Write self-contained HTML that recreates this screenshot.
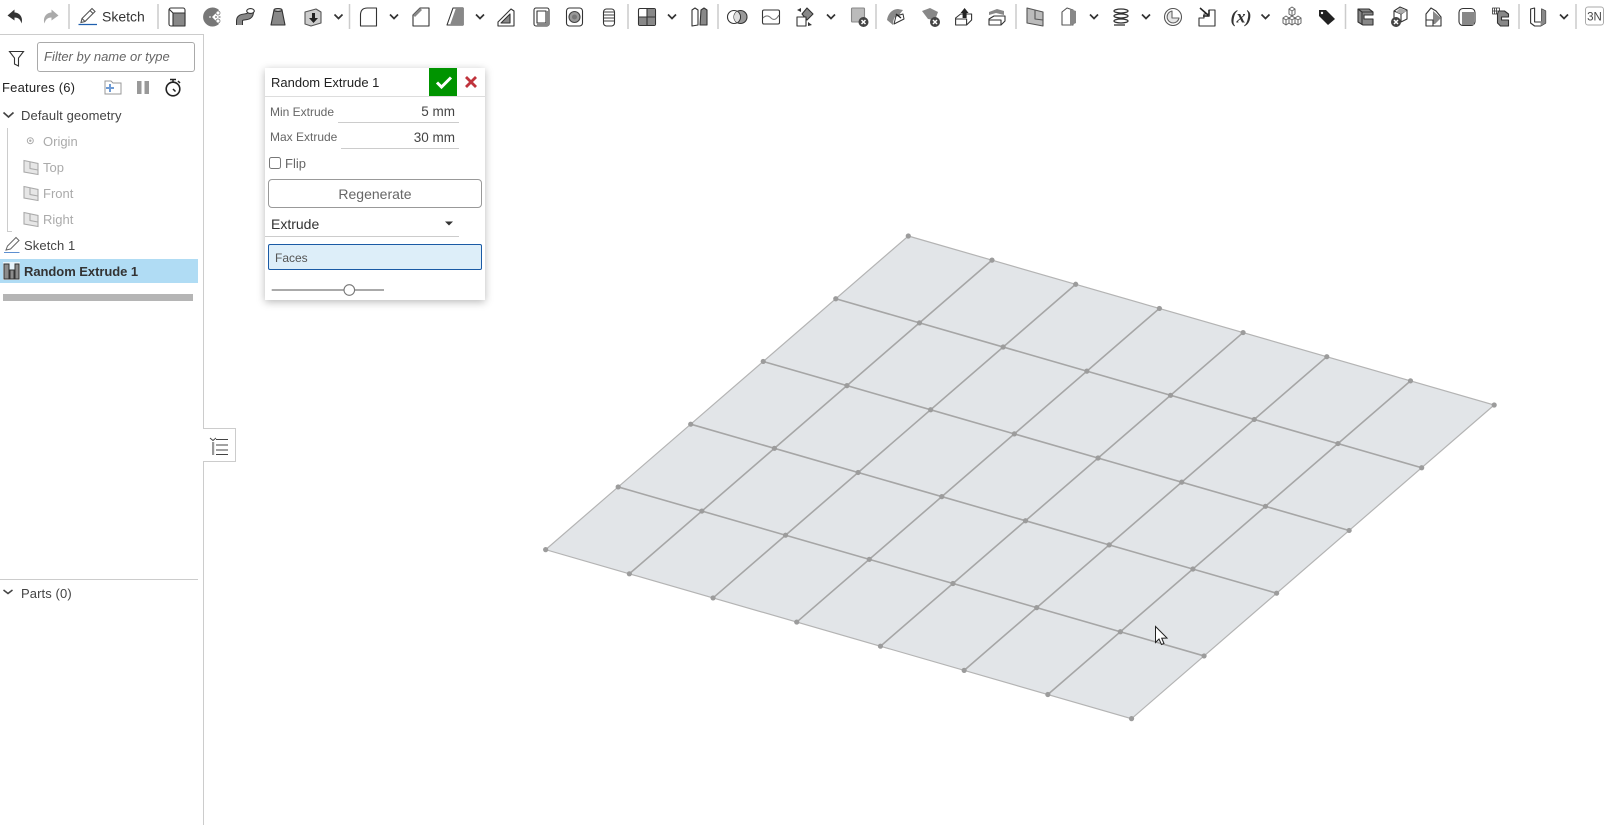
<!DOCTYPE html>
<html lang="en"><head><meta charset="utf-8"><title>Random Extrude 1</title>
<style>
*{box-sizing:border-box}
html,body{margin:0;padding:0;width:1608px;height:825px;overflow:hidden;background:#fff;font-family:"Liberation Sans",sans-serif;color:#333}
.a{position:absolute;white-space:nowrap;line-height:16px}
svg{position:absolute;overflow:visible}
.g{color:#aaa;font-size:13px}
.p{font-size:13px;color:#444;letter-spacing:.1px}
.l{font-size:12px;color:#666}
.u{position:absolute;height:1px;background:#ccc}
</style></head><body>

<!-- canvas -->
<svg style="left:0;top:0" width="1608" height="825" viewBox="0 0 1608 825">
<path d="M908.3 236L1494.2 405L1131.55 718.65L545.65 549.65Z" fill="#e2e5e8" stroke="#b4b4b4" stroke-width="1.200"/>
<g stroke="#a6a6a6" stroke-width="1.600" fill="none">
<path d="M835.77 298.73L1421.67 467.73M763.24 361.46L1349.14 530.46M690.71 424.19L1276.61 593.19M618.18 486.92L1204.08 655.92"/>
<path d="M992 260.14L629.35 573.79M1075.7 284.28L713.05 597.93M1159.4 308.42L796.75 622.07M1243.1 332.56L880.45 646.21M1326.8 356.7L964.15 670.35M1410.5 380.84L1047.85 694.49"/>
</g>
<defs><g id="row" fill="#9c9c9c"><circle cx="908.3" cy="236" r="2.600"/><circle cx="992" cy="260.14" r="2.600"/><circle cx="1075.7" cy="284.28" r="2.600"/><circle cx="1159.4" cy="308.42" r="2.600"/><circle cx="1243.1" cy="332.56" r="2.600"/><circle cx="1326.8" cy="356.7" r="2.600"/><circle cx="1410.5" cy="380.84" r="2.600"/><circle cx="1494.2" cy="405" r="2.600"/></g></defs>
<use href="#row"/><use href="#row" transform="translate(-72.53 62.73)"/><use href="#row" transform="translate(-145.06 125.46)"/><use href="#row" transform="translate(-217.59 188.19)"/><use href="#row" transform="translate(-290.12 250.92)"/><use href="#row" transform="translate(-362.65 313.65)"/>
<!-- cursor -->
<path d="M1155.5 626.5V642.5L1159 639L1161.5 644.5L1164 643.5L1161.7 638.2L1167 638Z" fill="#fff" stroke="#222" stroke-width="1"/>
</svg>

<!-- toolbar -->
<svg style="left:0;top:0" width="1608" height="34" viewBox="0 0 1608 34">
<defs>
<g id="x"><circle r="5" fill="#444"/><path d="M-2 -2L2 2M2 -2L-2 2" stroke="#fff" stroke-width="1.500"/></g>
<path id="c" d="M-4 -2L0 2L4 -2" fill="none" stroke="#333" stroke-width="1.700"/>
</defs>
<g stroke="#ccc" stroke-width="1.500"><path d="M69 4V29M158 4V29M349.500 4V29M628 4V29M718 4V29M876 4V29M1016 4V29M1345.500 4V29M1519 4V29M1576 4V29"/></g>
<use href="#c" x="338.500" y="16.500"/><use href="#c" x="394" y="16.500"/><use href="#c" x="480" y="16.500"/><use href="#c" x="672" y="16.500"/><use href="#c" x="831" y="16.500"/><use href="#c" x="1094" y="16.500"/><use href="#c" x="1146" y="16.500"/><use href="#c" x="1265.500" y="16.500"/><use href="#c" x="1564" y="16.500"/>
<g transform="translate(15.500 16.500)"><path d="M-1 -7L-8 -1L-1 4V1C3 1 5 3 6 7C8 1 4 -4 -1 -4Z" fill="#333"/></g>
<g transform="translate(50.500 16.500)"><path d="M1 -7L8 -1L1 4V1C-3 1 -5 3 -6 7C-8 1 -4 -4 1 -4Z" fill="#aaa"/></g>
<g transform="translate(88 16.500)" fill="none" stroke="#555" stroke-width="1.100"><path d="M-7 6L-6 2L4 -8L7 -5L-3 5Z"/><path d="M2 -6L5 -3M-6 2L-3 5"/><path d="M-9.500 8H9" stroke="#1f5fae" stroke-width="1.300"/></g>
<text x="102" y="21.500" font-size="14" fill="#333" font-family="Liberation Sans, sans-serif">Sketch</text>
<g stroke="#333" stroke-width="1.100" stroke-linejoin="round">
<g transform="translate(177 17)"><rect x="-8" y="-9" width="16" height="18" rx="2" fill="#fff"/><path d="M-8 -8L-4 -4H8" fill="none"/><rect x="-4" y="-4" width="12" height="13" fill="#888"/></g>
<g transform="translate(212 17)"><path d="M7 -7A9.500 9.500 0 1 0 7 7L0 0Z" fill="#777" stroke="none"/><circle cx="6" cy="-4" r="2" fill="#fff" stroke="#777" stroke-width=".8"/><circle cx="6" cy="4" r="2" fill="#fff" stroke="#777" stroke-width=".8"/><path d="M-3 0H9" stroke="#fff" stroke-dasharray="2 1.500" fill="none"/><path d="M3 0H9" stroke="#555" stroke-dasharray="2 1.500" fill="none"/></g>
<g transform="translate(245.500 17)"><path d="M-6 8V4C-6 -3 5 3 5 -5" fill="none" stroke="#333" stroke-width="7"/><path d="M-6 8V4C-6 -3 5 3 5 -5" fill="none" stroke="#888" stroke-width="5"/><ellipse cx="5" cy="-6" rx="3.800" ry="2.400" fill="#fff"/></g>
<g transform="translate(278 17)"><path d="M-4 -7H4L7 8H-7Z" fill="#888"/><ellipse cx="0" cy="-7" rx="4" ry="1.500" fill="#bbb"/></g>
<g transform="translate(313 17)"><path d="M-8 -5L3 -8L8 -5V6L-2 9L-8 7Z" fill="#ccc" stroke="#555"/><path d="M-1 -4H2V1H5L0.500 6L-4 1H-1Z" fill="#222" stroke="none"/></g>
<g transform="translate(368.500 17)"><path d="M-8 9V-2Q-8 -9 -1 -9H8V9Z" fill="#fff"/></g>
<g transform="translate(421 17)"><path d="M-8 9V-2L-1 -9H8V9Z" fill="#fff"/><path d="M-8 -2L-1 -9L1 -7L-6 0Z" fill="#888" stroke="none"/></g>
<g transform="translate(455 17)"><path d="M-8 8L-2 -9H8V8Z" fill="#fff"/><path d="M-5 8L1 -9H8V8Z" fill="#888" stroke="none"/></g>
<g transform="translate(506 17)"><path d="M-8 9V5L5 -8L8 -6V9Z" fill="#fff"/><path d="M-5 6L4 -3V6Z" fill="#888"/></g>
<g transform="translate(541 17)"><rect x="-7" y="-9" width="15" height="18" rx="2" fill="#fff"/><path d="M-4 -6H5V6H-4Z" fill="#fff"/><path d="M5 -6H8V9H-4V6H5Z" fill="#888" stroke="none"/></g>
<g transform="translate(574.500 17)"><rect x="-8" y="-9" width="16" height="18" rx="3" fill="#fff"/><circle r="5.500" fill="#999" stroke="#444"/><circle r="2.500" fill="#777" stroke="none"/></g>
<g transform="translate(609 17)"><rect x="-5.500" y="-8" width="11" height="17" rx="3" fill="#fff"/><path d="M-5 -5H5M-5 -2H5M-5 1H5M-5 4H5" stroke="#666" stroke-width="1.300" fill="none"/></g>
<g transform="translate(647 17)"><rect x="-8.500" y="-8.500" width="17" height="17" rx="1.500" fill="#fff"/><path d="M0 -8H8V0H0ZM-8 0H8V8H-8Z" fill="#888" stroke="none"/><path d="M-8 0H8M0 -8V8" fill="none"/></g>
<g transform="translate(699 17)"><path d="M-1 8L-7 9V-7L-4 -9L-1 -7Z" fill="#fff"/><path d="M1 8H8V-7L5 -9L2 -7Z" fill="#888"/></g>
<g transform="translate(737 17)" fill="none"><circle cx="3.500" r="6.500" fill="#999" stroke="none"/><circle cx="3.500" r="6.500"/><circle cx="-3" r="6.500"/><path d="M0 -5.500A6.500 6.500 0 0 1 0 5.500A6.500 6.500 0 0 1 0 -5.500" fill="#ddd" stroke="none"/></g>
<g transform="translate(771 17)"><rect x="-8.500" y="-7" width="17" height="14" rx="1.500" fill="#fff"/><path d="M-8 1Q-4 -3 0 1T8 -2" fill="none" stroke="#777"/></g>
<g transform="translate(805 17)"><path d="M2 -9L8 -3L2 3L-3 -3Z" fill="#888"/><rect x="-8" y="0" width="9" height="9" fill="#fff"/><path d="M-8 -7L-4 -9V-5ZM7 8L3 9V5Z" fill="#333" stroke="none"/></g>
<g transform="translate(858.500 16)"><rect x="-7" y="-8" width="13" height="14" rx="1" fill="#bbb" stroke="#888"/><use href="#x" x="5" y="6" stroke="none"/></g>
<g transform="translate(896 17)" stroke="none"><path d="M-9 3C-8 -4 -3 -8 2 -8L7 -7L3 -2C-1 -2 -3 2 -3 8Z" fill="#888"/><path d="M-2 7L0 -1L7 -3L8 2Z" fill="#fff" stroke="#333" stroke-width="1"/><path d="M0 -3L5 1" stroke="#222" stroke-width="1.400"/></g>
<g transform="translate(931 16)" stroke="none"><path d="M-9 -5L-1 -8L7 -4L4 4L-3 3Z" fill="#888"/><use href="#x" x="4" y="6"/></g>
<g transform="translate(963.600 17)"><path d="M-8 1L-3 -3H8V3L3 8H-8Z" fill="#fff"/><path d="M-8 2H3V8" fill="none"/><path d="M1 -9L5 -4H3V1H-1V-4H-3Z" fill="#222" stroke="none"/></g>
<g transform="translate(997 17)"><path d="M-8 2L-3 -1H8V4L4 8H-8Z" fill="#fff"/><path d="M-8 3H4V8" fill="none"/><path d="M-8 -5L0 -8L7 -6V-2L-1 -4L-8 -2Z" fill="#888" stroke="none"/></g>
<g transform="translate(1035 17)"><path d="M-8 -9L8 -5V9L-8 6Z" fill="#bbb" stroke="#555"/><path d="M0 -7V2L8 3" fill="none" stroke="#555"/></g>
<g transform="translate(1069 17)"><path d="M-7 8V-5L-2 -9L4 -7V8Z" fill="#fff" stroke="#555"/><path d="M1 -8L7 -6V6L1 9Z" fill="#888" stroke="none"/></g>
<g transform="translate(1121 17)" fill="none" stroke-width="1.300"><ellipse cx="0" cy="-6" rx="7" ry="2"/><ellipse cx="0" cy="-1" rx="7" ry="2"/><ellipse cx="0" cy="4" rx="7" ry="2"/><path d="M-7 8H4"/></g>
<g transform="translate(1173 17)"><circle r="8.500" fill="#fff" stroke="#555"/><path d="M-1 -6V1H6A6 6 0 1 1 -1 -6Z" fill="#e6e6e6" stroke="#666"/></g>
<g transform="translate(1207 17)"><path d="M-8 9V1H-3V-3H2V-7H8V9Z" fill="#fff"/><path d="M-7 -9L1 -2M2 -7V-1H-4" fill="none" stroke="#222" stroke-width="1.500"/></g>
<g transform="translate(1292 17)" fill="#fff" stroke="#666" stroke-width="1"><path d="M-3 -8L0 -10L3 -8V-3L0 -1L-3 -3Z"/><path d="M-3 -8L0 -6L3 -8M0 -6V-1"/><path d="M-9 1L-6 -1L-3 1V6L-6 8L-9 6Z"/><path d="M-9 1L-6 3L-3 1M-6 3V8"/><path d="M3 1L6 -1L9 1V6L6 8L3 6Z"/><path d="M3 1L6 3L9 1M6 3V8"/><path d="M-3 1L0 -1L3 1V6L0 8L-3 6Z"/><path d="M-3 1L0 3L3 1M0 3V8"/></g>
<g transform="translate(1327 17)" stroke="none"><path d="M-8 -7H-1L8 2L1 8L-8 -1Z" fill="#222"/><circle cx="-5" cy="-4" r="1.200" fill="#fff"/></g>
<g transform="translate(1365 17)"><path d="M-7 -8H4L8 -5V-2H-1V2H8V8H-2L-7 5Z" fill="#888"/><path d="M-7 -8L-3 -5H8M-3 -5V8" fill="none"/></g>
<g transform="translate(1399 16)"><path d="M-5 -5L1 -9L8 -6V3L2 6L-5 3Z" fill="#fff"/><path d="M-5 -5L2 -2L8 -6M2 -2V6" fill="none"/><path d="M-3 -4L2 -2L8 -5L1 -8Z" fill="#aaa" stroke="none"/><use href="#x" x="-3" y="6" stroke="none"/></g>
<g transform="translate(1433 17)"><path d="M-7 9V-3L-2 -9L3 -6L8 0V9Z" fill="#fff"/><path d="M0 -6L8 1L2 7H0Z" fill="#888" stroke="none"/><path d="M-7 3H0V9" fill="none"/></g>
<g transform="translate(1467 17)"><rect x="-8" y="-8.500" width="16" height="17" rx="4" fill="#fff"/><rect x="-5" y="-5" width="12" height="13" fill="#888" stroke="none"/></g>
<g transform="translate(1500.500 17)"><path d="M-8 -9H-1V-3H-8ZM-6 -9V-3M-4 -9V-3M-8 -6H-1" fill="#fff" stroke-width=".8"/><path d="M-2 -6H4L8 -3V0H1V3H8V9H0L-3 6V-3Z" fill="#888"/></g>
<g transform="translate(1537.600 17)"><path d="M-7 -8L-3 -9V5H4V-8L8 -6V6L3 9H-3L-7 6Z" fill="#fff"/><path d="M4 -8L8 -6V6L3 9V5L4 4Z" fill="#888" stroke="none"/></g>
</g>
<text x="1241" y="22.500" font-size="18" font-weight="bold" font-style="italic" text-anchor="middle" fill="#333" font-family="Liberation Serif, serif">(x)</text>
<rect x="1585.500" y="7" width="18" height="18" rx="2.500" fill="#fff" stroke="#aaa"/>
<text x="1594.500" y="20.500" font-size="11.500" text-anchor="middle" fill="#444" font-family="Liberation Sans, sans-serif">3N</text>
</svg>

<!-- sidebar frame -->
<div class="u" style="left:0;top:34px;width:204px;background:#ccc"></div>
<div class="u" style="left:203px;top:34px;width:1px;height:394px;background:#ccc"></div>
<div class="u" style="left:203px;top:461px;width:1px;height:364px;background:#ccc"></div>

<svg style="left:0;top:34px" width="204" height="270" viewBox="0 34 204 270">
<path d="M9.500 51.500H23.500L18.500 58V66L14.500 64V58Z" fill="#fff" stroke="#333" stroke-width="1.100"/>
<!-- folder -->
<path d="M105 81H111L113 83H121V94H105Z" fill="none" stroke="#999" stroke-width="1"/>
<path d="M110 84V92M106 88H114" stroke="#6d9ad4" stroke-width="2"/>
<!-- pause -->
<rect x="137" y="81" width="4.500" height="13" fill="#999"/><rect x="144.500" y="81" width="4.500" height="13" fill="#999"/>
<!-- timer -->
<circle cx="173" cy="89" r="6.800" fill="#fff" stroke="#222" stroke-width="1.600"/><path d="M170 79.500H176M173 80V82M173 89L175.500 91.500M178 81L180 83" stroke="#222" stroke-width="1.500" fill="none"/>
<!-- tree -->
<path d="M3.500 112.500L8.500 117L13.500 112.500" fill="none" stroke="#444" stroke-width="1.700"/>
<path d="M7.500 128V231.500H12" fill="none" stroke="#ccc" stroke-width="1"/>
<circle cx="30.300" cy="140.700" r="3" fill="none" stroke="#aaa"/><circle cx="30.300" cy="140.700" r="1.200" fill="#aaa"/>
<g id="pl" fill="#e6e6e6" stroke="#aaa" stroke-width="1.100"><path d="M24 160.500L38 163.500V174.500L24 172Z"/><path d="M30 162V168.500L38 170" fill="none"/></g>
<use href="#pl" y="26"/><use href="#pl" y="52"/>
<g fill="none" stroke="#666" stroke-width="1"><path d="M6 250L7.500 246L16 237.500L19 240.500L10.500 249Z"/></g>
<path d="M4 252.500H19.500" stroke="#5d8fd0" stroke-width="1"/>
<!-- highlighted -->
<rect x="0" y="259" width="198" height="24" fill="#b0dcf4"/>
<rect x="3" y="262" width="17" height="18" fill="#e8f4fb"/>
<path d="M4 264H9V279H4ZM10 270H14V279H10ZM15 264H19V279H15Z" fill="#8c8c8c" stroke="#333" stroke-width="1"/>
<rect x="3" y="294" width="190" height="7" fill="#b5b5b5"/>
</svg>

<div class="a" style="left:44px;top:49px;font-size:13px;font-style:italic;color:#666;width:0">Filter by name or type</div>
<div class="a" style="left:37px;top:42px;width:158px;height:30px;border:1px solid #aaa;border-radius:3px"></div>
<div class="a" style="left:2px;top:80px;font-size:13px;letter-spacing:.2px;color:#222">Features (6)</div>
<div class="a p" style="left:21px;top:108px">Default geometry</div>
<div class="a g" style="left:43px;top:134px">Origin</div>
<div class="a g" style="left:43px;top:160px">Top</div>
<div class="a g" style="left:43px;top:186px">Front</div>
<div class="a g" style="left:43px;top:212px">Right</div>
<div class="a p" style="left:24px;top:238px">Sketch 1</div>
<div class="a" style="left:24px;top:264px;font-size:13px;font-weight:bold;color:#333;letter-spacing:-.05px">Random Extrude 1</div>

<div class="u" style="left:0;top:579px;width:198px;background:#ccc"></div>
<svg style="left:0;top:580px" width="20" height="20" viewBox="0 580 20 20"><path d="M3.500 590L8 593.500L12.500 590" fill="none" stroke="#444" stroke-width="1.500"/></svg>
<div class="a p" style="left:21px;top:586px">Parts (0)</div>

<!-- collapse tab -->
<div class="a" style="left:203px;top:428px;width:33px;height:34px;background:#fff;border:1px solid #ccc;border-left:none"></div>
<svg style="left:203px;top:428px" width="33" height="34" viewBox="203 428 33 34">
<path d="M210 438L213 440.500L216 438" fill="none" stroke="#444" stroke-width="1"/>
<rect x="212" y="442" width="2.200" height="13" fill="#999"/>
<path d="M216 439.500H228M216 445H228M216 450H228M216 454.500H228" stroke="#444" stroke-width="1"/>
</svg>

<!-- dialog -->
<div class="a" style="left:265px;top:68px;width:220px;height:232px;background:#fff;box-shadow:0 2px 8px rgba(0,0,0,.28)"></div>
<div class="a" style="left:271px;top:75px;font-size:13px;color:#222">Random Extrude 1</div>
<div class="a" style="left:429px;top:68px;width:28px;height:28px;background:#009400"></div>
<svg style="left:429px;top:68px" width="56" height="28" viewBox="429 68 56 28">
<path d="M437 82.500L441.500 87L451 77.500" fill="none" stroke="#fff" stroke-width="3"/>
<path d="M466 77L476 87M476 77L466 87" stroke="#c0333c" stroke-width="2.800"/>
</svg>
<div class="u" style="left:265px;top:96px;width:220px;background:#ddd"></div>
<div class="a l" style="left:270px;top:104px">Min Extrude</div>
<div class="a" style="left:338px;top:104px;width:117px;text-align:right;font-size:13.500px;color:#444">5 mm</div>
<div class="u" style="left:338px;top:122px;width:121px"></div>
<div class="a l" style="left:270px;top:129px">Max Extrude</div>
<div class="a" style="left:341px;top:130px;width:114px;text-align:right;font-size:13.500px;color:#444">30 mm</div>
<div class="u" style="left:341px;top:148px;width:118px"></div>
<div class="a" style="left:269px;top:157px;width:12px;height:12px;border:1px solid #777;border-radius:2.500px"></div>
<div class="a" style="left:285px;top:156px;font-size:13px;color:#666">Flip</div>
<div class="a" style="left:268px;top:179px;width:214px;height:29px;border:1px solid #999;border-radius:4px;text-align:center;font-size:14px;line-height:29px;color:#666">Regenerate</div>
<div class="a" style="left:271px;top:216px;font-size:14px;color:#333">Extrude</div>
<svg style="left:444px;top:221px" width="10" height="6" viewBox="0 0 10 6"><path d="M1 0.500H9L5 4.500Z" fill="#333"/></svg>
<div class="u" style="left:265px;top:236px;width:194px"></div>
<div class="a" style="left:268px;top:244px;width:214px;height:26px;background:#ddeef9;border:1px solid #1a5aa5;border-radius:2px;padding-left:6px;font-size:12px;line-height:26px;color:#555">Faces</div>
<svg style="left:265px;top:280px" width="130" height="20" viewBox="265 280 130 20">
<path d="M271.700 290H384" stroke="#777" stroke-width="1.200"/>
<circle cx="349.300" cy="290" r="5.300" fill="#fff" stroke="#777" stroke-width="1.100"/>
</svg>
</body></html>
